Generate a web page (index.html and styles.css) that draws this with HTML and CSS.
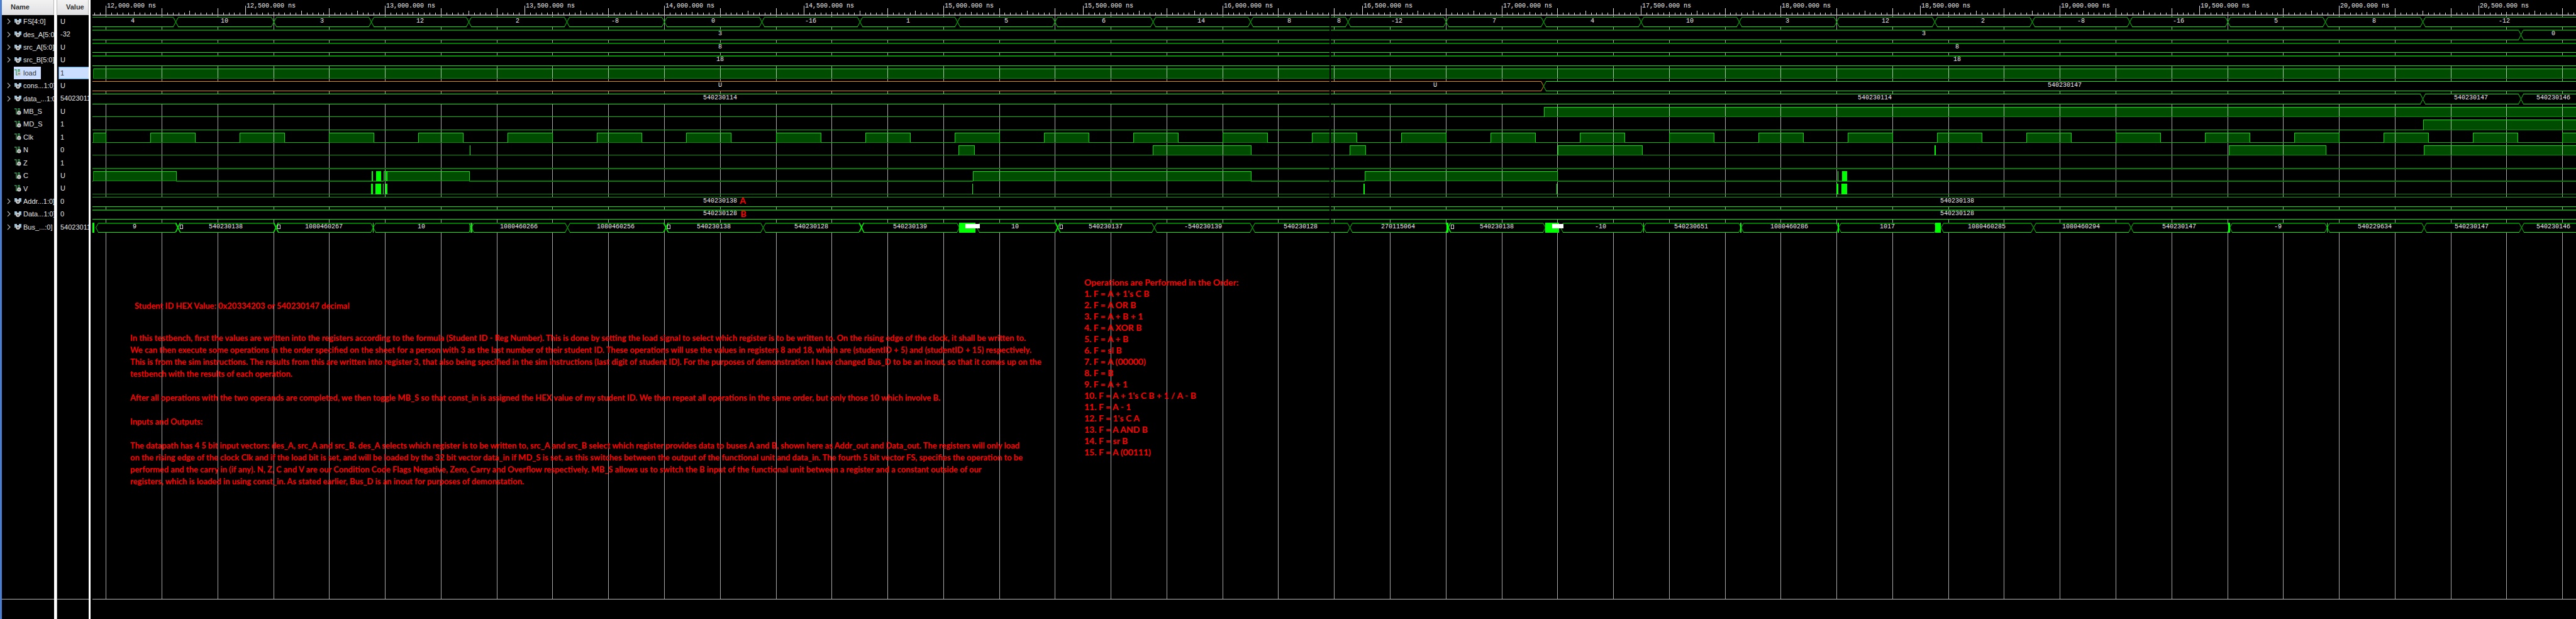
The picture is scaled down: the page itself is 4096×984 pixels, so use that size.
FILE: index.html
```html
<!DOCTYPE html>
<html lang="en">
<head>
<meta charset="utf-8">
<title>Waveform viewer</title>
<link rel="stylesheet" href="styles.css">
</head>
<body>
<svg class="defs" aria-hidden="true">
  <symbol id="bus" viewBox="0 0 11 11">
    <path d="M0 1h4v2h3V1h4v6H9L8 9H3L2 7H0z" fill="#7fa6bd"/>
    <path d="M0 1h4v4H0zM7 1h4v4H7z" fill="#9cc4dc"/>
    <circle cx="5.5" cy="6.5" r="3.4" fill="#c9c9c9"/>
    <circle cx="5.5" cy="6.5" r="1.2" fill="#555"/>
  </symbol>
  <symbol id="wire" viewBox="0 0 11 11">
    <path d="M0 1h3v8h3V0h2v4" fill="none" stroke="#3f9a55" stroke-width="1.3"/>
    <circle cx="7.3" cy="7.3" r="3.2" fill="#c9c9c9"/>
    <circle cx="7.3" cy="7.3" r="1.1" fill="#666"/>
  </symbol>
  <symbol id="chev" viewBox="0 0 6 10">
    <path d="M1 1l4 4-4 4" fill="none" stroke="#a8a8a8" stroke-width="1.3"/>
  </symbol>
</svg>
<main class="viewer">
  <section class="panel names">
    <h2 class="head">Name</h2>
    <ul class="rows">
      <li class="row"><button class="tog" aria-label="Expand"><svg><use href="#chev"/></svg></button><span class="sig"><svg><use href="#bus"/></svg>FS[4:0]</span></li>
      <li class="row"><button class="tog" aria-label="Expand"><svg><use href="#chev"/></svg></button><span class="sig"><svg><use href="#bus"/></svg>des_A[5:0]</span></li>
      <li class="row"><button class="tog" aria-label="Expand"><svg><use href="#chev"/></svg></button><span class="sig"><svg><use href="#bus"/></svg>src_A[5:0]</span></li>
      <li class="row"><button class="tog" aria-label="Expand"><svg><use href="#chev"/></svg></button><span class="sig"><svg><use href="#bus"/></svg>src_B[5:0]</span></li>
      <li class="row"><span class="tog"></span><span class="sig selected"><svg><use href="#wire"/></svg>load</span></li>
      <li class="row"><button class="tog" aria-label="Expand"><svg><use href="#chev"/></svg></button><span class="sig"><svg><use href="#bus"/></svg>cons...1:0]</span></li>
      <li class="row"><button class="tog" aria-label="Expand"><svg><use href="#chev"/></svg></button><span class="sig"><svg><use href="#bus"/></svg>data_...1:0]</span></li>
      <li class="row"><span class="tog"></span><span class="sig"><svg><use href="#wire"/></svg>MB_S</span></li>
      <li class="row"><span class="tog"></span><span class="sig"><svg><use href="#wire"/></svg>MD_S</span></li>
      <li class="row"><span class="tog"></span><span class="sig"><svg><use href="#wire"/></svg>Clk</span></li>
      <li class="row"><span class="tog"></span><span class="sig"><svg><use href="#wire"/></svg>N</span></li>
      <li class="row"><span class="tog"></span><span class="sig"><svg><use href="#wire"/></svg>Z</span></li>
      <li class="row"><span class="tog"></span><span class="sig"><svg><use href="#wire"/></svg>C</span></li>
      <li class="row"><span class="tog"></span><span class="sig"><svg><use href="#wire"/></svg>V</span></li>
      <li class="row"><button class="tog" aria-label="Expand"><svg><use href="#chev"/></svg></button><span class="sig"><svg><use href="#bus"/></svg>Addr...1:0]</span></li>
      <li class="row"><button class="tog" aria-label="Expand"><svg><use href="#chev"/></svg></button><span class="sig"><svg><use href="#bus"/></svg>Data...1:0]</span></li>
      <li class="row"><button class="tog" aria-label="Expand"><svg><use href="#chev"/></svg></button><span class="sig"><svg><use href="#bus"/></svg>Bus_...:0]</span></li>
    </ul>
    <div class="rest"></div>
  </section>
  <section class="panel values">
    <h2 class="head">Value</h2>
    <ul class="rows">
      <li class="val">U</li><li class="val">-32</li><li class="val">U</li><li class="val">U</li>
      <li class="val selected">1</li><li class="val">U</li><li class="val">540230114</li><li class="val">U</li>
      <li class="val">1</li><li class="val">1</li><li class="val">0</li><li class="val">1</li>
      <li class="val">U</li><li class="val">U</li><li class="val">0</li><li class="val">0</li>
      <li class="val">540230114</li>
    </ul>
    <div class="rest"></div>
  </section>
  <section class="plot">
    <svg class="waves" id="waves" role="img" aria-label="Signal waveforms"></svg>
    <div class="notes">
      <div class="story">
        <p class="title">Student ID HEX Value: 0x20334203 or 540230147 decimal</p>
        <p class="para">In this testbench, first the values are written into the registers according to the formula (Student ID - Reg Number). This is done by setting the load signal to select which register is to be written to. On the rising edge of the clock, it shall be written to.<br>We can then execute some operations in the order specified on the sheet for a person with 3 as the last number of their student ID. These operations will use the values in registers 8 and 18, which are (studentID + 5) and (studentID + 15) respectively.<br>This is from the sim instructions. The results from this are written into register 3, that also being specified in the sim instructions (last digit of student ID). For the purposes of demonstration I have changed Bus_D to be an inout, so that it comes up on the<br>testbench with the results of each operation.</p>
        <p class="para">After all operations with the two operands are completed, we then toggle MB_S so that const_in is assigned the HEX value of my student ID. We then repeat all operations in the same order, but only those 10 which involve B.</p>
        <p class="para">Inputs and Outputs:</p>
        <p class="para">The datapath has 4 5 bit input vectors: des_A, src_A and src_B. des_A selects which register is to be written to, src_A and src_B select which register provides data to buses A and B, shown here as Addr_out and Data_out. The registers will only load<br>on the rising edge of the clock Clk and if the load bit is set, and will be loaded by the 32 bit vector data_in if MD_S is set, as this switches between the output of the functional unit and data_in. The fourth 5 bit vector FS, specifies the operation to be<br>performed and the carry in (if any). N, Z, C and V are our Condition Code Flags Negative, Zero, Carry and Overflow respectively. MB_S allows us to switch the B input of the functional unit between a register and a constant outside of our<br>registers, which is loaded in using const_in. As stated earlier, Bus_D is an inout for purposes of demonstation.</p>
      </div>
      <div class="ops">
        <p>Operations are Performed in the Order:</p>
        <ol>
          <li>1. F = A + 1's C B</li><li>2. F = A OR B</li><li>3. F = A + B + 1</li><li>4. F = A XOR B</li>
          <li>5. F = A + B</li><li>6. F = sl B</li><li>7. F = A (00000)</li><li>8. F = B</li><li>9. F = A + 1</li>
          <li>10. F = A + 1's C B + 1 / A - B</li><li>11. F = A - 1</li><li>12. F = 1's C A</li>
          <li>13. F = A AND B</li><li>14. F = sr B</li><li>15. F = A (00111)</li>
        </ol>
      </div>
    </div>
  </section>
</main>
<script src="waves.js"></script>
</body>
</html>
```

FILE: styles.css
```css
* { box-sizing: border-box; }
html, body { margin: 0; height: 100%; background: #000; overflow: hidden; }
ul, ol, p, h2 { margin: 0; padding: 0; list-style: none; }
.defs { position: absolute; width: 0; height: 0; }

.viewer {
  display: flex;
  height: 100vh;
  border-left: 3px solid #4a7dd0;
  color: #e4e4e4;
  font: 11px/20px "Liberation Sans", Arial, sans-serif;
}
.panel { display: flex; flex-direction: column; flex: none; overflow: hidden; }
.names { width: 87px; border-right: 4px solid #fff; }
.values { width: 54px; border-left: 1px solid #b4b4b4; border-right: 3px solid #fff; }
.head {
  height: 24px;
  flex: none;
  background: linear-gradient(#f2f2f2, #e0e0e3);
  border-right: 1px solid #b8b8b8;
  border-bottom: 1px solid #cfcfcf;
  color: #333;
  font-size: 11px;
  line-height: 22px;
  padding-left: 14px;
}
.rows { display: grid; grid-template-rows: repeat(17, 1fr); height: 347px; flex: none; }
.row { display: flex; align-items: center; white-space: nowrap; min-width: 0; }
.tog {
  width: 19px;
  height: 20px;
  flex: none;
  padding: 0 0 0 8px;
  border: 0;
  background: none;
  display: flex;
  align-items: center;
}
.tog svg { width: 6px; height: 10px; }
.sig { display: flex; align-items: center; gap: 3px; height: 20px; padding: 0 7px 0 0; }
.sig svg { width: 11px; height: 11px; margin-left: 1px; }
.selected { background: #cbdeff; color: #333; }
.val { padding-left: 5px; white-space: nowrap; overflow: hidden; line-height: 20px; }
.val.selected { border: 1px solid #3c8fd0; border-right: 0; margin-left: 2px; padding-left: 2px; line-height: 19px; }
.rest { flex: 1; border-bottom: 1px solid #b9b9b9; margin-bottom: 31px; }

.plot { position: relative; flex: 1; min-width: 0; margin-left: 3px; overflow: hidden; }
.waves { display: block; width: 100%; height: 100%; }
.waves text { font: 10px "Liberation Mono", "Courier New", monospace; fill: #ececec; }
.waves .mid { text-anchor: middle; }
.waves .mark { font: bold 14px Lato, sans-serif; fill: #f00; text-anchor: middle; }

.notes {
  position: absolute;
  inset: 440px 0 auto 60px;
  display: flex;
  white-space: nowrap;
  color: #f00;
  font: bold 13px/19px Lato, "Open Sans", sans-serif;
}
.story { width: 1517px; padding-top: 37px; }
.title { padding: 0 0 32px 7px; }
.para { margin-bottom: 19px; }
.ops { font-size: 14px; line-height: 18px; }
```

FILE: waves.js
```javascript
const T0 = 11951, T1 = 20848, END = 20900, SPLICE = 16383;
const HEAD = 24, ROWS = 17, ROWS_H = 347, FOOT = 32;
const BRIGHT = '#00f000', MID = '#00b000', DIM = '#007d00', ORANGE = '#e08c00';

const fs = [4, 10, 3, 12, 2, -8, 0, -16, 1, 5, 6, 14, 8, -12, 7, 4, 10, 3, 12, 2, -8, -16, 5, 8];
const fsSegs = fs.map((v, i) => {
  const a = i ? 11900 + 350 * i : T0 - 50, b = 12250 + 350 * i;
  return v === 8 && b === 16450 ? { a, b, labels: [[16240, 8], [16417, 8]] }
    : { a, b, labels: [[i ? (a + b) / 2 : 12096, v]] };
});
fsSegs.push({ a: 20300, b: END, labels: [[20592, -12]] });

const clk = [];
for (let t = 11840; t < T1; t += 320) clk.push([t, t + 160]);

/* [start, end, label time, label] */
const busValues = [
  [11963, 12257, 12104, '9'], [12257, 12607, 12430, '540230138'], [12607, 12957, 12781, '1080460267'],
  [12957, 13308, 13131, '10'], [13308, 13653, 13480, '1080460266'], [13653, 14004, 13827, '1080460256'],
  [14004, 14353, 14177, '540230138'], [14353, 14705, 14528, '540230128'], [14705, 15056, 14881, '540230139'],
  [15120, 15408, 15258, '10'], [15408, 15755, 15582, '540230137'], [15755, 16107, 15930, '-540230139'],
  [16107, 16455, 16280, '540230128'], [16455, 16807, 16629, '270115064'], [16807, 17157, 16983, '540230138'],
  [17210, 17508, 17355, '-10'], [17508, 17858, 17680, '540230651'], [17858, 18207, 18031, '1080460286'],
  [18207, 18557, 18381, '1017'], [18574, 18904, 18737, '1080460285'], [18904, 19254, 19076, '1080460294'],
  [19254, 19607, 19427, '540230147'], [19607, 19957, 19781, '-9'], [19957, 20303, 20128, '540229634'],
  [20303, 20652, 20476, '540230147'], [20652, END, 20769, '540230146']
];
const one = (...labels) => [{ a: T0 - 50, b: END, labels }];

const lanes = [
  { bus: fsSegs, top: MID },
  { bus: [{ a: T0 - 50, b: 20650, labels: [[14200, 3], [18513, 3]] }, { a: 20650, b: END, labels: [[20767, 0]] }], top: DIM, thick: 2 },
  { bus: one([14200, 8], [18632, 8]), top: DIM, thick: 2 },
  { bus: one([14200, 18], [18632, 18]), top: '#009000', thick: 2 },
  { high: [[T0 - 50, END]] },
  { bus: [{ a: T0 - 50, b: 17150, labels: [[14200, 'U'], [16763, 'U']], color: ORANGE }, { a: 17150, b: END, labels: [[19017, 540230147]] }], top: BRIGHT },
  { bus: [{ a: T0 - 50, b: 20300, labels: [[14200, 540230114], [18336, 540230114]] }, { a: 20300, b: 20650, labels: [[20474, 540230147]] }, { a: 20650, b: END, labels: [[20767, 540230146]] }], top: BRIGHT },
  { high: [[17151, END]], low: '#00c000' },
  { high: [[20301, END]], low: '#00c000' },
  { high: clk, low: '#00c000' },
  { high: [[15054, 15110], [15751, 16103], [16455, 16512], [17202, 17503], [19605, 19953], [20304, END]], solid: [[13303, 13306], [18552, 18555]], low: '#009600' },
  { high: [], low: DIM, thick: 2 },
  { high: [[T0 - 50, 12252], [12995, 13302], [15107, 16101], [16509, 17200]], solid: [[12953, 12956], [12968, 12987], [13004, 13009], [18204, 18207], [18219, 18239]], low: DIM, thick: 2 },
  { high: [], solid: [[12951, 12957], [12966, 12987], [12993, 12996], [13003, 13009], [15104, 15107], [16505, 16509], [17196, 17200], [18200, 18207], [18217, 18238]], low: '#008c00' },
  { bus: one([14200, 540230138], [18632, 540230138]), top: '#009c00' },
  { bus: one([14200, 540230128], [18632, 540230128]), top: '#009000', thick: 2 },
  { bus: busValues.map(([a, b, t, v]) => ({ a, b, labels: [[t, v]] })), top: DIM, thick: 2,
    solid: [[T0, 11958], [12956, 12959], [13303, 13306], [13308, 13312], [15056, 15116], [16803, 16810], [17157, 17206], [17507, 17510], [17855, 17860], [18205, 18209], [18554, 18574], [19603, 19609], [19956, 19959]],
    heavy: [12257, 12607, 14004, 14705, 15408, 16807],
    boxes: [12270, 12619, 14016, 15421, 16822],
    white: [[15080, 15130], [17182, 17222]] }
];

function draw() {
  const svg = document.getElementById('waves');
  const w = svg.clientWidth, h = svg.clientHeight;
  const x = t => Math.round((t - T0) / (T1 - T0) * w - 0.5);
  const rect = (a, y, ww, hh, fill, extra = '') => `<rect x="${a}" y="${y}" width="${ww}" height="${hh}" fill="${fill}"${extra}/>`;
  const line = (x1, y1, x2, y2, c, sw = 1) => `<line x1="${x1}" y1="${y1}" x2="${x2}" y2="${y2}" stroke="${c}" stroke-width="${sw}"/>`;
  const span = i => {
    const r = HEAD + i * ROWS_H / ROWS;
    return [Math.floor(r + 3.5), Math.floor(r + 18.8)];
  };
  const bottom = h - FOOT;
  let fills = '', grid = '', out = '', labels = '';

  for (let t = Math.ceil(T0 / 200) * 200; t < T1; t += 200)
    grid += rect(x(t), HEAD, 1, bottom - HEAD, '#fff', ' opacity="0.66"');

  lanes.forEach((l, i) => {
    const [top, bot] = span(i);
    const th = l.thick || 1;
    if (l.high) {
      let at = 0;
      for (const [a, b] of l.high) {
        const xa = Math.max(x(a), 1), xb = x(b);
        fills += rect(xa, top, xb - xa, bot - top, '#004c00');
        if (xa > at) out += rect(at, bot, xa - at, th, l.low);
        out += rect(xa, top, xb - xa, 1, '#00e600') + rect(xa, bot, xb - xa, 1, '#008c00')
          + rect(xa, top, 1, bot - top + 1, xa > 1 ? '#00dc00' : '#009600') + rect(xb, top, 1, bot - top + 1, '#00dc00');
        at = xb;
      }
      if (at < w) out += rect(at, bot, w - at, th, l.low);
    } else {
      for (const s of l.bus) {
        const xa = x(s.a) + 0.5, xb = x(s.b) + 0.5, t = top + 0.5, b = bot + 0.5, m = (t + b) / 2;
        const c = s.color || BRIGHT;
        out += `<polygon points="${xa},${m} ${xa + 4},${t} ${xb - 4},${t} ${xb},${m} ${xb - 4},${b} ${xa + 4},${b}" fill="#000"/>`;
        out += `<path d="M${xa + 4} ${t}L${xa} ${m}L${xa + 4} ${b}M${xb - 4} ${t}L${xb} ${m}L${xb - 4} ${b}" fill="none" stroke="${s.color || '#00c800'}"/>`;
        out += rect(xa + 3.5, top, xb - xa - 7, th, s.color || l.top) + rect(xa + 3.5, bot, xb - xa - 7, 1, c);
        for (const [lt, v] of s.labels) labels += `<text class="mid" x="${x(lt)}" y="${top + 9}">${v}</text>`;
      }
      for (const t of l.heavy || []) {
        const c = x(t) + 0.5;
        out += line(c - 3, top, c + 4, bot, BRIGHT, 1.5) + line(c + 4, top, c - 3, bot, BRIGHT, 1.5);
      }
      for (const t of l.boxes || [])
        labels += `<rect x="${x(t) - 1.5}" y="${top + 3.5}" width="4" height="6" fill="#000" stroke="#ddd"/>`;
    }
    for (const [a, b] of l.solid || [])
      out += rect(x(a), top, Math.max(1, x(b) - x(a)), bot - top + 1, '#00ff00');
    for (const [a, b] of l.white || [])
      labels += rect(x(a), top + 2, x(b) - x(a), 7, '#fff');
  });

  let ruler = rect(0, HEAD - 1, w, 2, '#8a8a8a');
  for (let t = Math.ceil(T0 / 20) * 20; t < T1; t += 20) {
    let y = 20;
    if (t % 500 === 0) y = 9;
    else if (t % 100 === 0) y = t % 500 === 100 ? 19 : t % 200 === 0 ? 13 : 17;
    ruler += rect(x(t), y, 1, HEAD - y, '#d8d8d8');
    if (t % 500 === 0) ruler += `<text x="${x(t) + 2}" y="12">${t.toLocaleString('en-US')}.000 ns</text>`;
  }
  const gap = rect(x(SPLICE), HEAD - 1, 2, ROWS_H + 2, '#000');
  const marks = `<text class="mark" x="${x(14281)}" y="${span(14)[0] + 11}">A</text><text class="mark" x="${x(14283)}" y="${span(15)[0] + 12}">B</text>`;
  svg.innerHTML = fills + grid + out + ruler + gap + rect(0, bottom, w, 1, '#b9b9b9') + labels + marks;
}
draw();
window.addEventListener('resize', draw);
```
